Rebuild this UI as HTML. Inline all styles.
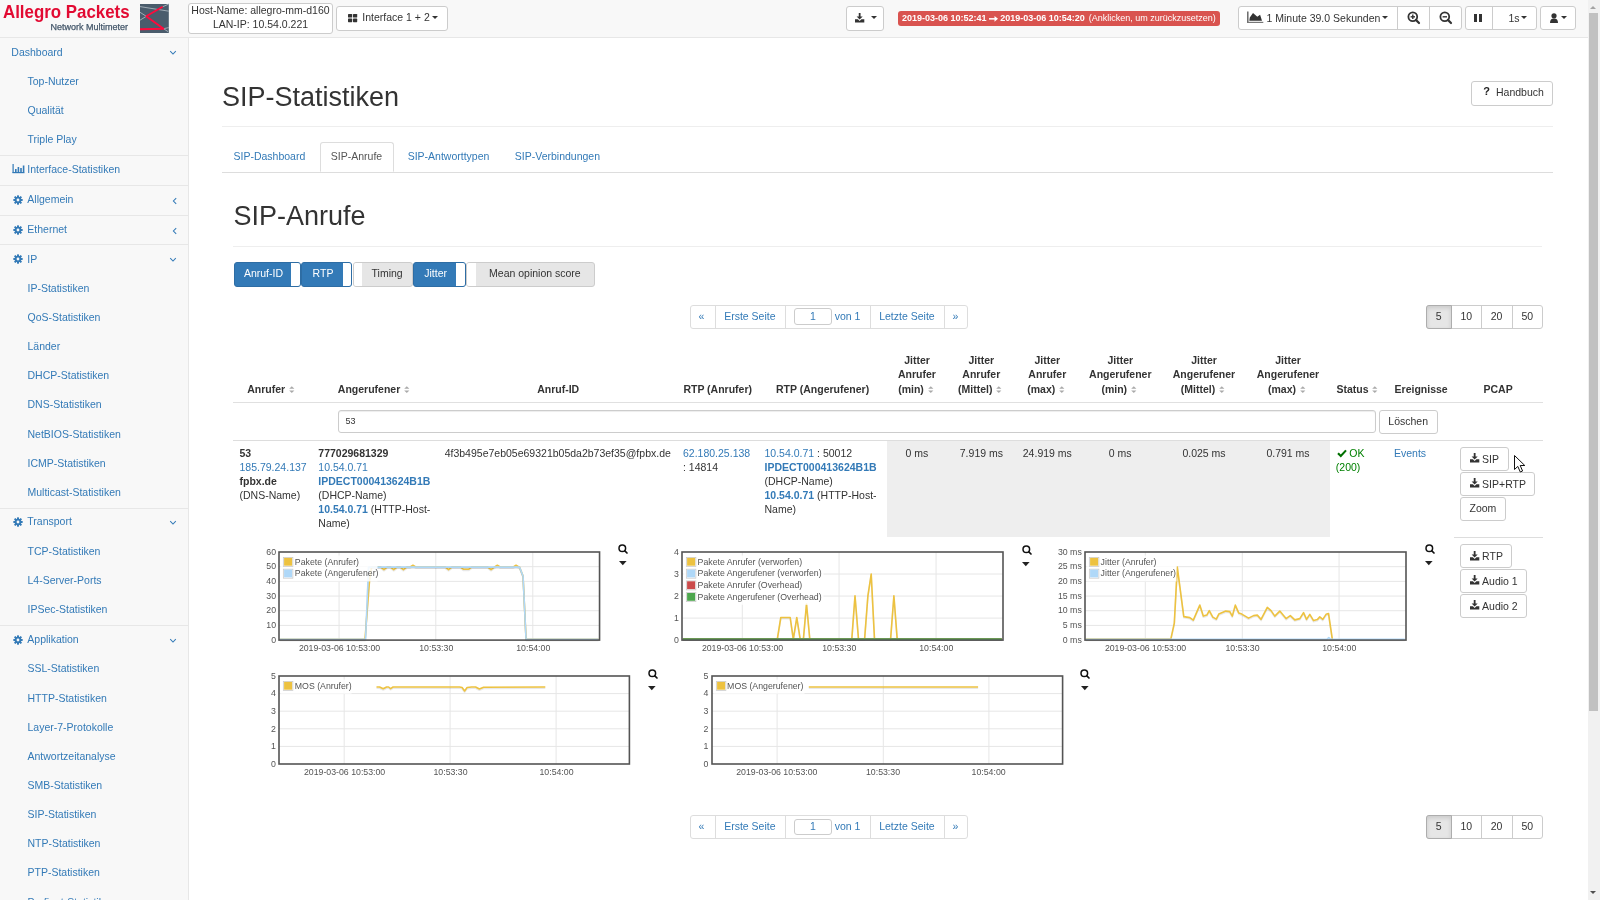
<!DOCTYPE html><html><head><meta charset="utf-8"><style>
html,body{margin:0;padding:0;}
body{width:1600px;height:900px;overflow:hidden;position:relative;background:#fff;font-family:"Liberation Sans",sans-serif;color:#333;}
.a{position:absolute;box-sizing:border-box;}
.t{position:absolute;white-space:nowrap;}
#wrap{position:absolute;left:0;top:0;width:1600px;height:900px;will-change:transform;}
svg{position:absolute;overflow:visible;}
</style></head><body><div id="wrap">
<div class="a" style="left:0px;top:0px;width:1588px;height:37px;background:#f8f8f8;"></div><div class="a" style="left:0px;top:37px;width:1588px;height:1px;background:#e7e7e7;"></div><div class="a" style="left:0px;top:38px;width:188px;height:862px;background:#f8f8f8;"></div><div class="a" style="left:188px;top:38px;width:1px;height:862px;background:#e7e7e7;"></div><div class="a" style="left:1588px;top:0px;width:12px;height:900px;background:#f1f1f1;"></div><div class="a" style="left:1589px;top:13px;width:9px;height:698px;background:#c1c1c1;"></div><div class="t " style="left:11.3px;top:45.76px;font-size:10.5px;line-height:12.6px;color:#337ab7;font-weight:normal;">Dashboard</div><svg width="8" height="6" style="left:169px;top:50.1px"><polyline points="1.2,1.2 4,4 6.8,1.2" fill="none" stroke="#337ab7" stroke-width="1.05"/></svg><div class="t " style="left:27.5px;top:74.90px;font-size:10.5px;line-height:12.6px;color:#337ab7;font-weight:normal;">Top-Nutzer</div><div class="t " style="left:27.5px;top:104.04px;font-size:10.5px;line-height:12.6px;color:#337ab7;font-weight:normal;">Qualität</div><div class="t " style="left:27.5px;top:133.18px;font-size:10.5px;line-height:12.6px;color:#337ab7;font-weight:normal;">Triple Play</div><div class="a" style="left:0px;top:154.7px;width:188px;height:1px;background:#e7e7e7;"></div><div class="t " style="left:27.3px;top:163.16px;font-size:10.5px;line-height:12.6px;color:#337ab7;font-weight:normal;">Interface-Statistiken</div><svg width="13" height="10" style="left:11.5px;top:164.10px"><g fill="#337ab7"><rect x="0.5" y="0" width="1.2" height="9"/><rect x="0.5" y="8" width="12" height="1.2"/><rect x="3" y="5" width="1.6" height="3"/><rect x="5.6" y="3" width="1.6" height="5"/><rect x="8.2" y="4" width="1.6" height="4"/><rect x="10.8" y="1.5" width="1.6" height="6.5"/></g></svg><div class="a" style="left:0px;top:184.8px;width:188px;height:1px;background:#e7e7e7;"></div><div class="t " style="left:27.3px;top:193.16px;font-size:10.5px;line-height:12.6px;color:#337ab7;font-weight:normal;">Allgemein</div><svg width="10" height="10" viewBox="0 0 20 20" style="left:13px;top:194.5px"><g fill="#337ab7"><circle cx="10" cy="10" r="6.6"/><rect x="8" y="0.6" width="4" height="5" rx="0.8" transform="rotate(0 10 10)"/><rect x="8" y="0.6" width="4" height="5" rx="0.8" transform="rotate(45 10 10)"/><rect x="8" y="0.6" width="4" height="5" rx="0.8" transform="rotate(90 10 10)"/><rect x="8" y="0.6" width="4" height="5" rx="0.8" transform="rotate(135 10 10)"/><rect x="8" y="0.6" width="4" height="5" rx="0.8" transform="rotate(180 10 10)"/><rect x="8" y="0.6" width="4" height="5" rx="0.8" transform="rotate(225 10 10)"/><rect x="8" y="0.6" width="4" height="5" rx="0.8" transform="rotate(270 10 10)"/><rect x="8" y="0.6" width="4" height="5" rx="0.8" transform="rotate(315 10 10)"/></g><circle cx="10" cy="10" r="2.8" fill="#f8f8f8"/></svg><svg width="6" height="8" style="left:171.8px;top:196.9px"><polyline points="4.2,1.2 1.4,4 4.2,6.8" fill="none" stroke="#337ab7" stroke-width="1.05"/></svg><div class="a" style="left:0px;top:214.7px;width:188px;height:1px;background:#e7e7e7;"></div><div class="t " style="left:27.3px;top:223.16px;font-size:10.5px;line-height:12.6px;color:#337ab7;font-weight:normal;">Ethernet</div><svg width="10" height="10" viewBox="0 0 20 20" style="left:13px;top:224.5px"><g fill="#337ab7"><circle cx="10" cy="10" r="6.6"/><rect x="8" y="0.6" width="4" height="5" rx="0.8" transform="rotate(0 10 10)"/><rect x="8" y="0.6" width="4" height="5" rx="0.8" transform="rotate(45 10 10)"/><rect x="8" y="0.6" width="4" height="5" rx="0.8" transform="rotate(90 10 10)"/><rect x="8" y="0.6" width="4" height="5" rx="0.8" transform="rotate(135 10 10)"/><rect x="8" y="0.6" width="4" height="5" rx="0.8" transform="rotate(180 10 10)"/><rect x="8" y="0.6" width="4" height="5" rx="0.8" transform="rotate(225 10 10)"/><rect x="8" y="0.6" width="4" height="5" rx="0.8" transform="rotate(270 10 10)"/><rect x="8" y="0.6" width="4" height="5" rx="0.8" transform="rotate(315 10 10)"/></g><circle cx="10" cy="10" r="2.8" fill="#f8f8f8"/></svg><svg width="6" height="8" style="left:171.8px;top:226.9px"><polyline points="4.2,1.2 1.4,4 4.2,6.8" fill="none" stroke="#337ab7" stroke-width="1.05"/></svg><div class="a" style="left:0px;top:244.1px;width:188px;height:1px;background:#e7e7e7;"></div><div class="t " style="left:27.3px;top:252.66px;font-size:10.5px;line-height:12.6px;color:#337ab7;font-weight:normal;">IP</div><svg width="10" height="10" viewBox="0 0 20 20" style="left:13px;top:254.0px"><g fill="#337ab7"><circle cx="10" cy="10" r="6.6"/><rect x="8" y="0.6" width="4" height="5" rx="0.8" transform="rotate(0 10 10)"/><rect x="8" y="0.6" width="4" height="5" rx="0.8" transform="rotate(45 10 10)"/><rect x="8" y="0.6" width="4" height="5" rx="0.8" transform="rotate(90 10 10)"/><rect x="8" y="0.6" width="4" height="5" rx="0.8" transform="rotate(135 10 10)"/><rect x="8" y="0.6" width="4" height="5" rx="0.8" transform="rotate(180 10 10)"/><rect x="8" y="0.6" width="4" height="5" rx="0.8" transform="rotate(225 10 10)"/><rect x="8" y="0.6" width="4" height="5" rx="0.8" transform="rotate(270 10 10)"/><rect x="8" y="0.6" width="4" height="5" rx="0.8" transform="rotate(315 10 10)"/></g><circle cx="10" cy="10" r="2.8" fill="#f8f8f8"/></svg><svg width="8" height="6" style="left:169px;top:257.0px"><polyline points="1.2,1.2 4,4 6.8,1.2" fill="none" stroke="#337ab7" stroke-width="1.05"/></svg><div class="t " style="left:27.5px;top:281.80px;font-size:10.5px;line-height:12.6px;color:#337ab7;font-weight:normal;">IP-Statistiken</div><div class="t " style="left:27.5px;top:310.94px;font-size:10.5px;line-height:12.6px;color:#337ab7;font-weight:normal;">QoS-Statistiken</div><div class="t " style="left:27.5px;top:340.08px;font-size:10.5px;line-height:12.6px;color:#337ab7;font-weight:normal;">Länder</div><div class="t " style="left:27.5px;top:369.22px;font-size:10.5px;line-height:12.6px;color:#337ab7;font-weight:normal;">DHCP-Statistiken</div><div class="t " style="left:27.5px;top:398.36px;font-size:10.5px;line-height:12.6px;color:#337ab7;font-weight:normal;">DNS-Statistiken</div><div class="t " style="left:27.5px;top:427.50px;font-size:10.5px;line-height:12.6px;color:#337ab7;font-weight:normal;">NetBIOS-Statistiken</div><div class="t " style="left:27.5px;top:456.64px;font-size:10.5px;line-height:12.6px;color:#337ab7;font-weight:normal;">ICMP-Statistiken</div><div class="t " style="left:27.5px;top:485.78px;font-size:10.5px;line-height:12.6px;color:#337ab7;font-weight:normal;">Multicast-Statistiken</div><div class="a" style="left:0px;top:507.5px;width:188px;height:1px;background:#e7e7e7;"></div><div class="t " style="left:27.3px;top:515.46px;font-size:10.5px;line-height:12.6px;color:#337ab7;font-weight:normal;">Transport</div><svg width="10" height="10" viewBox="0 0 20 20" style="left:13px;top:516.8px"><g fill="#337ab7"><circle cx="10" cy="10" r="6.6"/><rect x="8" y="0.6" width="4" height="5" rx="0.8" transform="rotate(0 10 10)"/><rect x="8" y="0.6" width="4" height="5" rx="0.8" transform="rotate(45 10 10)"/><rect x="8" y="0.6" width="4" height="5" rx="0.8" transform="rotate(90 10 10)"/><rect x="8" y="0.6" width="4" height="5" rx="0.8" transform="rotate(135 10 10)"/><rect x="8" y="0.6" width="4" height="5" rx="0.8" transform="rotate(180 10 10)"/><rect x="8" y="0.6" width="4" height="5" rx="0.8" transform="rotate(225 10 10)"/><rect x="8" y="0.6" width="4" height="5" rx="0.8" transform="rotate(270 10 10)"/><rect x="8" y="0.6" width="4" height="5" rx="0.8" transform="rotate(315 10 10)"/></g><circle cx="10" cy="10" r="2.8" fill="#f8f8f8"/></svg><svg width="8" height="6" style="left:169px;top:519.8px"><polyline points="1.2,1.2 4,4 6.8,1.2" fill="none" stroke="#337ab7" stroke-width="1.05"/></svg><div class="t " style="left:27.5px;top:544.60px;font-size:10.5px;line-height:12.6px;color:#337ab7;font-weight:normal;">TCP-Statistiken</div><div class="t " style="left:27.5px;top:573.74px;font-size:10.5px;line-height:12.6px;color:#337ab7;font-weight:normal;">L4-Server-Ports</div><div class="t " style="left:27.5px;top:602.88px;font-size:10.5px;line-height:12.6px;color:#337ab7;font-weight:normal;">IPSec-Statistiken</div><div class="a" style="left:0px;top:624.6px;width:188px;height:1px;background:#e7e7e7;"></div><div class="t " style="left:27.3px;top:633.26px;font-size:10.5px;line-height:12.6px;color:#337ab7;font-weight:normal;">Applikation</div><svg width="10" height="10" viewBox="0 0 20 20" style="left:13px;top:634.6px"><g fill="#337ab7"><circle cx="10" cy="10" r="6.6"/><rect x="8" y="0.6" width="4" height="5" rx="0.8" transform="rotate(0 10 10)"/><rect x="8" y="0.6" width="4" height="5" rx="0.8" transform="rotate(45 10 10)"/><rect x="8" y="0.6" width="4" height="5" rx="0.8" transform="rotate(90 10 10)"/><rect x="8" y="0.6" width="4" height="5" rx="0.8" transform="rotate(135 10 10)"/><rect x="8" y="0.6" width="4" height="5" rx="0.8" transform="rotate(180 10 10)"/><rect x="8" y="0.6" width="4" height="5" rx="0.8" transform="rotate(225 10 10)"/><rect x="8" y="0.6" width="4" height="5" rx="0.8" transform="rotate(270 10 10)"/><rect x="8" y="0.6" width="4" height="5" rx="0.8" transform="rotate(315 10 10)"/></g><circle cx="10" cy="10" r="2.8" fill="#f8f8f8"/></svg><svg width="8" height="6" style="left:169px;top:637.6px"><polyline points="1.2,1.2 4,4 6.8,1.2" fill="none" stroke="#337ab7" stroke-width="1.05"/></svg><div class="t " style="left:27.5px;top:662.40px;font-size:10.5px;line-height:12.6px;color:#337ab7;font-weight:normal;">SSL-Statistiken</div><div class="t " style="left:27.5px;top:691.54px;font-size:10.5px;line-height:12.6px;color:#337ab7;font-weight:normal;">HTTP-Statistiken</div><div class="t " style="left:27.5px;top:720.68px;font-size:10.5px;line-height:12.6px;color:#337ab7;font-weight:normal;">Layer-7-Protokolle</div><div class="t " style="left:27.5px;top:749.82px;font-size:10.5px;line-height:12.6px;color:#337ab7;font-weight:normal;">Antwortzeitanalyse</div><div class="t " style="left:27.5px;top:778.96px;font-size:10.5px;line-height:12.6px;color:#337ab7;font-weight:normal;">SMB-Statistiken</div><div class="t " style="left:27.5px;top:808.10px;font-size:10.5px;line-height:12.6px;color:#337ab7;font-weight:normal;">SIP-Statistiken</div><div class="t " style="left:27.5px;top:837.24px;font-size:10.5px;line-height:12.6px;color:#337ab7;font-weight:normal;">NTP-Statistiken</div><div class="t " style="left:27.5px;top:866.38px;font-size:10.5px;line-height:12.6px;color:#337ab7;font-weight:normal;">PTP-Statistiken</div><div class="t " style="left:27.5px;top:895.52px;font-size:10.5px;line-height:12.6px;color:#337ab7;font-weight:normal;">Profinet-Statistiken</div><div class="t " style="left:3.3px;top:1.29px;font-size:18.5px;line-height:22.2px;color:#e20a32;font-weight:bold;transform:scaleX(0.912);transform-origin:0 0;">Allegro Packets</div><div class="t " style="left:50.5px;top:22.08px;font-size:9.0px;line-height:10.8px;color:#44576a;font-weight:normal;-webkit-text-stroke:0.25px #44576a;">Network Multimeter</div><svg width="30" height="30" style="left:140.2px;top:4px"><rect x="0" y="0" width="28.8" height="29" fill="#4a5c6c"/>
<g stroke="#a9b4bd" stroke-width="0.9" fill="none"><line x1="0" y1="2.6" x2="28.8" y2="7.2"/><line x1="28.8" y1="0" x2="22.6" y2="2.8"/><line x1="0" y1="8.3" x2="6.3" y2="12.3"/><line x1="6.3" y1="12.3" x2="0" y2="16.2"/><line x1="23.5" y1="24.7" x2="28.8" y2="23.6"/><line x1="23.5" y1="24.7" x2="28" y2="27.6"/></g>
<polyline points="22.6,2.8 6.3,12.3 23.5,24.7 0,25.3" fill="none" stroke="#ff0a3c" stroke-width="1.9" stroke-linejoin="round"/></svg><div class="a" style="left:188px;top:2.6px;width:145px;height:31px;background:#fff;border:1px solid #ccc;border-radius:3px;"></div><div class="t" style="left:180.50px;width:160px;text-align:center;top:4.26px;font-size:10.5px;line-height:12.6px;color:#333;font-weight:normal;">Host-Name: allegro-mm-d160</div><div class="t" style="left:180.50px;width:160px;text-align:center;top:18.26px;font-size:10.5px;line-height:12.6px;color:#333;font-weight:normal;">LAN-IP: 10.54.0.221</div><div class="a" style="left:336px;top:6px;width:112px;height:24.5px;background:#fff;border:1px solid #ccc;border-radius:3px;"></div><svg width="10" height="9" style="left:347.5px;top:13.5px"><g fill="#333"><rect x="0" y="0" width="4.2" height="3.6" rx="0.6"/><rect x="5" y="0" width="4.2" height="3.6" rx="0.6"/><rect x="0" y="4.6" width="4.2" height="3.6" rx="0.6"/><rect x="5" y="4.6" width="4.2" height="3.6" rx="0.6"/></g></svg><div class="t " style="left:362.3px;top:11.16px;font-size:10.5px;line-height:12.6px;color:#333;font-weight:normal;">Interface 1 + 2</div><svg width="8" height="5" style="left:432px;top:16px"><polygon points="0,0 6.0,0 3.0,3.0" fill="#333"/></svg><div class="a" style="left:846px;top:6px;width:38px;height:24.5px;background:#fff;border:1px solid #ccc;border-radius:3px;"></div><svg width="10" height="10" style="left:855px;top:13px"><g fill="#333"><rect x="3.75" y="0" width="1.8" height="4"/><polygon points="1.6,3.5 7.7,3.5 4.65,6.6"/><path d="M0,6.3 H2.9 L4.65,8.0 L6.4,6.3 H9.3 V9.5 H0 Z"/></g></svg><svg width="8" height="5" style="left:871px;top:16px"><polygon points="0,0 6.0,0 3.0,3.0" fill="#333"/></svg><div class="a" style="left:898.3px;top:10.8px;width:321.7px;height:15px;background:#d9534f;border-radius:3px;"></div><div class="t " style="left:902px;top:13.08px;font-size:9px;line-height:10.8px;color:#fff;font-weight:bold;">2019-03-06 10:52:41</div><svg width="10" height="6" style="left:988.8px;top:15.5px"><rect x="0" y="2.1" width="6.5" height="1.5" fill="#fff"/><polygon points="5.5,0 9,2.85 5.5,5.7" fill="#fff"/></svg><div class="t " style="left:1000.3px;top:13.08px;font-size:9px;line-height:10.8px;color:#fff;font-weight:bold;">2019-03-06 10:54:20</div><div class="t " style="left:1088.8px;top:13.08px;font-size:9px;line-height:10.8px;color:#fff;font-weight:normal;">(Anklicken, um zurückzusetzen)</div><div class="a" style="left:1238px;top:6.2px;width:223.5px;height:24px;background:#fff;border:1px solid #ccc;border-radius:3px;"></div><div class="a" style="left:1397.2px;top:6.2px;width:1px;height:24px;background:#ccc;"></div><div class="a" style="left:1429.3px;top:6.2px;width:1px;height:24px;background:#ccc;"></div><svg width="17" height="13" style="left:1246.5px;top:11px"><g fill="#333"><rect x="0.3" y="0.5" width="1.1" height="11.5"/><rect x="0.3" y="10.8" width="16" height="1.2" fill="#777"/><polygon points="2.3,9.8 2.8,6.5 6,1.9 10.3,5.8 13.1,3.8 15,9.8"/></g></svg><div class="t " style="left:1266.5px;top:11.76px;font-size:10.5px;line-height:12.6px;color:#333;font-weight:normal;">1 Minute 39.0 Sekunden</div><svg width="8" height="5" style="left:1382px;top:16px"><polygon points="0,0 6.0,0 3.0,3.0" fill="#333"/></svg><svg width="13" height="13" style="left:1406.5px;top:10.5px"><g stroke="#333" fill="none"><circle cx="5.8" cy="5.8" r="4.4" stroke-width="1.8"/><line x1="8.9" y1="8.9" x2="12" y2="12" stroke-width="2.2" stroke-linecap="round"/><g stroke-width="1.4"><line x1="3.6" y1="5.8" x2="8" y2="5.8"/><line x1="5.8" y1="3.6" x2="5.8" y2="8"/></g></g></svg><svg width="13" height="13" style="left:1438.5px;top:10.5px"><g stroke="#333" fill="none"><circle cx="5.8" cy="5.8" r="4.4" stroke-width="1.8"/><line x1="8.9" y1="8.9" x2="12" y2="12" stroke-width="2.2" stroke-linecap="round"/><g stroke-width="1.4"><line x1="3.6" y1="5.8" x2="8" y2="5.8"/></g></g></svg><div class="a" style="left:1465.0px;top:6.2px;width:72.3px;height:24px;background:#fff;border:1px solid #ccc;border-radius:3px;"></div><div class="a" style="left:1492.3px;top:6.2px;width:1px;height:24px;background:#ccc;"></div><div class="a" style="left:1473.5px;top:13.5px;width:3.5px;height:8.5px;background:#333;"></div><div class="a" style="left:1478.5px;top:13.5px;width:3.5px;height:8.5px;background:#333;"></div><div class="t " style="left:1508.5px;top:11.76px;font-size:10.5px;line-height:12.6px;color:#333;font-weight:normal;">1s</div><svg width="8" height="5" style="left:1521px;top:16px"><polygon points="0,0 6.0,0 3.0,3.0" fill="#333"/></svg><div class="a" style="left:1540.1px;top:6.2px;width:35.5px;height:24px;background:#fff;border:1px solid #ccc;border-radius:3px;"></div><svg width="10" height="11" style="left:1549.5px;top:12.5px"><g fill="#333"><circle cx="4" cy="2.8" r="2.6"/><path d="M0,10 Q0,5.6 4,5.6 Q8,5.6 8,10 Z"/></g></svg><svg width="8" height="5" style="left:1561px;top:16px"><polygon points="0,0 6.0,0 3.0,3.0" fill="#333"/></svg><svg width="8" height="5" style="left:1590px;top:5px"><polygon points="0,4 6,4 3,1" fill="#a3a3a3"/></svg><svg width="8" height="5" style="left:1590px;top:891px"><polygon points="0,0 6,0 3,3" fill="#505050"/></svg><div class="t " style="left:222px;top:80.54px;font-size:27px;line-height:32.4px;color:#333;font-weight:normal;">SIP-Statistiken</div><div class="a" style="left:1470.5px;top:81.2px;width:82.5px;height:24.5px;background:#fff;border:1px solid #ccc;border-radius:3px;"></div><div class="t " style="left:1483.3px;top:85.19px;font-size:11px;line-height:13.2px;color:#222;font-weight:bold;">?</div><div class="t " style="left:1496px;top:85.66px;font-size:10.5px;line-height:12.6px;color:#333;font-weight:normal;">Handbuch</div><div class="a" style="left:222px;top:125.8px;width:1331px;height:1px;background:#eee;"></div><div class="a" style="left:222px;top:171.5px;width:1331px;height:1px;background:#ddd;"></div><div class="a" style="left:319.5px;top:142.2px;width:74px;height:30.3px;background:#fff;border:1px solid #ddd;border-bottom-color:transparent;border-radius:3px 3px 0 0;"></div><div class="t " style="left:233.5px;top:149.76px;font-size:10.5px;line-height:12.6px;color:#337ab7;font-weight:normal;">SIP-Dashboard</div><div class="t " style="left:330.8px;top:149.76px;font-size:10.5px;line-height:12.6px;color:#555;font-weight:normal;">SIP-Anrufe</div><div class="t " style="left:407.7px;top:149.76px;font-size:10.5px;line-height:12.6px;color:#337ab7;font-weight:normal;">SIP-Antworttypen</div><div class="t " style="left:514.8px;top:149.76px;font-size:10.5px;line-height:12.6px;color:#337ab7;font-weight:normal;">SIP-Verbindungen</div><div class="t " style="left:233.5px;top:200.44px;font-size:27px;line-height:32.4px;color:#333;font-weight:normal;">SIP-Anrufe</div><div class="a" style="left:233px;top:245.8px;width:1309px;height:1px;background:#eee;"></div><div class="a" style="left:233.7px;top:261.9px;width:67.2px;height:24.9px;background:#337ab7;border:1px solid #2e6da4;border-radius:3px;overflow:hidden;"></div><div class="a" style="left:291.09999999999997px;top:262.9px;width:8.8px;height:22.9px;background:#fff;border-radius:0 2px 2px 0;"></div><div class="t" style="left:229.90px;width:67.2px;text-align:center;top:267.36px;font-size:10.5px;line-height:12.6px;color:#fff;font-weight:normal;">Anruf-ID</div><div class="a" style="left:301.3px;top:261.9px;width:51px;height:24.9px;background:#337ab7;border:1px solid #2e6da4;border-radius:3px;overflow:hidden;"></div><div class="a" style="left:342.5px;top:262.9px;width:8.8px;height:22.9px;background:#fff;border-radius:0 2px 2px 0;"></div><div class="t" style="left:297.50px;width:51px;text-align:center;top:267.36px;font-size:10.5px;line-height:12.6px;color:#fff;font-weight:normal;">RTP</div><div class="a" style="left:352.5px;top:261.9px;width:60.5px;height:24.9px;background:#e6e6e6;border:1px solid #ccc;border-radius:3px;"></div><div class="a" style="left:353.5px;top:262.9px;width:8.8px;height:22.9px;background:#fff;border-radius:2px 0 0 2px;"></div><div class="t" style="left:356.90px;width:60.5px;text-align:center;top:267.36px;font-size:10.5px;line-height:12.6px;color:#333;font-weight:normal;">Timing</div><div class="a" style="left:413.2px;top:261.9px;width:52.5px;height:24.9px;background:#337ab7;border:1px solid #2e6da4;border-radius:3px;overflow:hidden;"></div><div class="a" style="left:455.9px;top:262.9px;width:8.8px;height:22.9px;background:#fff;border-radius:0 2px 2px 0;"></div><div class="t" style="left:409.40px;width:52.5px;text-align:center;top:267.36px;font-size:10.5px;line-height:12.6px;color:#fff;font-weight:normal;">Jitter</div><div class="a" style="left:465.9px;top:261.9px;width:129.2px;height:24.9px;background:#e6e6e6;border:1px solid #ccc;border-radius:3px;"></div><div class="a" style="left:466.9px;top:262.9px;width:8.8px;height:22.9px;background:#fff;border-radius:2px 0 0 2px;"></div><div class="t" style="left:470.30px;width:129.2px;text-align:center;top:267.36px;font-size:10.5px;line-height:12.6px;color:#333;font-weight:normal;">Mean opinion score</div><div class="a" style="left:690.3px;top:305.2px;width:278.2px;height:23.7px;background:#fff;border:1px solid #ddd;border-radius:3px;"></div><div class="a" style="left:715.2px;top:305.2px;width:1px;height:23.7px;background:#ddd;"></div><div class="a" style="left:785.3px;top:305.2px;width:1px;height:23.7px;background:#ddd;"></div><div class="a" style="left:870.2px;top:305.2px;width:1px;height:23.7px;background:#ddd;"></div><div class="a" style="left:944.3px;top:305.2px;width:1px;height:23.7px;background:#ddd;"></div><div class="t " style="left:698.5px;top:310.16px;font-size:10.5px;line-height:12.6px;color:#337ab7;font-weight:normal;">&laquo;</div><div class="t " style="left:724.2px;top:310.16px;font-size:10.5px;line-height:12.6px;color:#337ab7;font-weight:normal;">Erste Seite</div><div class="a" style="left:794.4px;top:308.4px;width:37.2px;height:16.2px;background:#fff;border:1px solid #ccc;border-radius:3px;"></div><div class="t" style="left:798.00px;width:30px;text-align:center;top:310.16px;font-size:10.5px;line-height:12.6px;color:#337ab7;font-weight:normal;">1</div><div class="t " style="left:834.7px;top:310.16px;font-size:10.5px;line-height:12.6px;color:#337ab7;font-weight:normal;">von 1</div><div class="t " style="left:879.2px;top:310.16px;font-size:10.5px;line-height:12.6px;color:#337ab7;font-weight:normal;">Letzte Seite</div><div class="t " style="left:952.5px;top:310.16px;font-size:10.5px;line-height:12.6px;color:#337ab7;font-weight:normal;">&raquo;</div><div class="a" style="left:1426.1px;top:305.2px;width:116.6px;height:23.7px;background:#fff;border:1px solid #ccc;border-radius:3px;"></div><div class="a" style="left:1426.1px;top:305.2px;width:26px;height:23.7px;background:#e6e6e6;border:1px solid #adadad;border-radius:3px 0 0 3px;box-shadow:inset 0 2px 4px rgba(0,0,0,.125);"></div><div class="a" style="left:1481.2px;top:305.2px;width:1px;height:23.7px;background:#ccc;"></div><div class="a" style="left:1512px;top:305.2px;width:1px;height:23.7px;background:#ccc;"></div><div class="t" style="left:1428.70px;width:20px;text-align:center;top:310.16px;font-size:10.5px;line-height:12.6px;color:#333;font-weight:normal;">5</div><div class="t" style="left:1451.30px;width:30px;text-align:center;top:310.16px;font-size:10.5px;line-height:12.6px;color:#333;font-weight:normal;">10</div><div class="t" style="left:1481.60px;width:30px;text-align:center;top:310.16px;font-size:10.5px;line-height:12.6px;color:#333;font-weight:normal;">20</div><div class="t" style="left:1512.30px;width:30px;text-align:center;top:310.16px;font-size:10.5px;line-height:12.6px;color:#333;font-weight:normal;">50</div><div class="a" style="left:690.3px;top:815.4px;width:278.2px;height:23.7px;background:#fff;border:1px solid #ddd;border-radius:3px;"></div><div class="a" style="left:715.2px;top:815.4px;width:1px;height:23.7px;background:#ddd;"></div><div class="a" style="left:785.3px;top:815.4px;width:1px;height:23.7px;background:#ddd;"></div><div class="a" style="left:870.2px;top:815.4px;width:1px;height:23.7px;background:#ddd;"></div><div class="a" style="left:944.3px;top:815.4px;width:1px;height:23.7px;background:#ddd;"></div><div class="t " style="left:698.5px;top:820.36px;font-size:10.5px;line-height:12.6px;color:#337ab7;font-weight:normal;">&laquo;</div><div class="t " style="left:724.2px;top:820.36px;font-size:10.5px;line-height:12.6px;color:#337ab7;font-weight:normal;">Erste Seite</div><div class="a" style="left:794.4px;top:818.6px;width:37.2px;height:16.2px;background:#fff;border:1px solid #ccc;border-radius:3px;"></div><div class="t" style="left:798.00px;width:30px;text-align:center;top:820.36px;font-size:10.5px;line-height:12.6px;color:#337ab7;font-weight:normal;">1</div><div class="t " style="left:834.7px;top:820.36px;font-size:10.5px;line-height:12.6px;color:#337ab7;font-weight:normal;">von 1</div><div class="t " style="left:879.2px;top:820.36px;font-size:10.5px;line-height:12.6px;color:#337ab7;font-weight:normal;">Letzte Seite</div><div class="t " style="left:952.5px;top:820.36px;font-size:10.5px;line-height:12.6px;color:#337ab7;font-weight:normal;">&raquo;</div><div class="a" style="left:1426.1px;top:815.4px;width:116.6px;height:23.7px;background:#fff;border:1px solid #ccc;border-radius:3px;"></div><div class="a" style="left:1426.1px;top:815.4px;width:26px;height:23.7px;background:#e6e6e6;border:1px solid #adadad;border-radius:3px 0 0 3px;box-shadow:inset 0 2px 4px rgba(0,0,0,.125);"></div><div class="a" style="left:1481.2px;top:815.4px;width:1px;height:23.7px;background:#ccc;"></div><div class="a" style="left:1512px;top:815.4px;width:1px;height:23.7px;background:#ccc;"></div><div class="t" style="left:1428.70px;width:20px;text-align:center;top:820.36px;font-size:10.5px;line-height:12.6px;color:#333;font-weight:normal;">5</div><div class="t" style="left:1451.30px;width:30px;text-align:center;top:820.36px;font-size:10.5px;line-height:12.6px;color:#333;font-weight:normal;">10</div><div class="t" style="left:1481.60px;width:30px;text-align:center;top:820.36px;font-size:10.5px;line-height:12.6px;color:#333;font-weight:normal;">20</div><div class="t" style="left:1512.30px;width:30px;text-align:center;top:820.36px;font-size:10.5px;line-height:12.6px;color:#333;font-weight:normal;">50</div><div class="t " style="left:247.2px;top:382.56px;font-size:10.5px;line-height:12.6px;color:#333;font-weight:bold;">Anrufer</div><svg width="7" height="8" style="left:288.5px;top:386.4px"><g fill="#aaa"><polygon points="0.2,2.7 5.4,2.7 2.8,0.2"/><polygon points="0.2,4.5 5.4,4.5 2.8,7.1"/></g></svg><div class="t " style="left:337.8px;top:382.56px;font-size:10.5px;line-height:12.6px;color:#333;font-weight:bold;">Angerufener</div><svg width="7" height="8" style="left:403.5px;top:386.4px"><g fill="#aaa"><polygon points="0.2,2.7 5.4,2.7 2.8,0.2"/><polygon points="0.2,4.5 5.4,4.5 2.8,7.1"/></g></svg><div class="t " style="left:537.2px;top:382.56px;font-size:10.5px;line-height:12.6px;color:#333;font-weight:bold;">Anruf-ID</div><div class="t " style="left:683.4px;top:382.56px;font-size:10.5px;line-height:12.6px;color:#333;font-weight:bold;">RTP (Anrufer)</div><div class="t " style="left:776px;top:382.56px;font-size:10.5px;line-height:12.6px;color:#333;font-weight:bold;">RTP (Angerufener)</div><div class="t" style="left:872.00px;width:90px;text-align:center;top:354.36px;font-size:10.5px;line-height:12.6px;color:#333;font-weight:bold;">Jitter</div><div class="t" style="left:872.00px;width:90px;text-align:center;top:368.46px;font-size:10.5px;line-height:12.6px;color:#333;font-weight:bold;">Anrufer</div><div class="t" style="left:866.00px;width:90px;text-align:center;top:382.56px;font-size:10.5px;line-height:12.6px;color:#333;font-weight:bold;">(min)</div><svg width="7" height="8" style="left:927.5px;top:386.4px"><g fill="#aaa"><polygon points="0.2,2.7 5.4,2.7 2.8,0.2"/><polygon points="0.2,4.5 5.4,4.5 2.8,7.1"/></g></svg><div class="t" style="left:936.30px;width:90px;text-align:center;top:354.36px;font-size:10.5px;line-height:12.6px;color:#333;font-weight:bold;">Jitter</div><div class="t" style="left:936.30px;width:90px;text-align:center;top:368.46px;font-size:10.5px;line-height:12.6px;color:#333;font-weight:bold;">Anrufer</div><div class="t" style="left:930.30px;width:90px;text-align:center;top:382.56px;font-size:10.5px;line-height:12.6px;color:#333;font-weight:bold;">(Mittel)</div><svg width="7" height="8" style="left:996px;top:386.4px"><g fill="#aaa"><polygon points="0.2,2.7 5.4,2.7 2.8,0.2"/><polygon points="0.2,4.5 5.4,4.5 2.8,7.1"/></g></svg><div class="t" style="left:1002.30px;width:90px;text-align:center;top:354.36px;font-size:10.5px;line-height:12.6px;color:#333;font-weight:bold;">Jitter</div><div class="t" style="left:1002.30px;width:90px;text-align:center;top:368.46px;font-size:10.5px;line-height:12.6px;color:#333;font-weight:bold;">Anrufer</div><div class="t" style="left:996.30px;width:90px;text-align:center;top:382.56px;font-size:10.5px;line-height:12.6px;color:#333;font-weight:bold;">(max)</div><svg width="7" height="8" style="left:1059.3px;top:386.4px"><g fill="#aaa"><polygon points="0.2,2.7 5.4,2.7 2.8,0.2"/><polygon points="0.2,4.5 5.4,4.5 2.8,7.1"/></g></svg><div class="t" style="left:1075.30px;width:90px;text-align:center;top:354.36px;font-size:10.5px;line-height:12.6px;color:#333;font-weight:bold;">Jitter</div><div class="t" style="left:1075.30px;width:90px;text-align:center;top:368.46px;font-size:10.5px;line-height:12.6px;color:#333;font-weight:bold;">Angerufener</div><div class="t" style="left:1069.30px;width:90px;text-align:center;top:382.56px;font-size:10.5px;line-height:12.6px;color:#333;font-weight:bold;">(min)</div><svg width="7" height="8" style="left:1131px;top:386.4px"><g fill="#aaa"><polygon points="0.2,2.7 5.4,2.7 2.8,0.2"/><polygon points="0.2,4.5 5.4,4.5 2.8,7.1"/></g></svg><div class="t" style="left:1159.00px;width:90px;text-align:center;top:354.36px;font-size:10.5px;line-height:12.6px;color:#333;font-weight:bold;">Jitter</div><div class="t" style="left:1159.00px;width:90px;text-align:center;top:368.46px;font-size:10.5px;line-height:12.6px;color:#333;font-weight:bold;">Angerufener</div><div class="t" style="left:1153.00px;width:90px;text-align:center;top:382.56px;font-size:10.5px;line-height:12.6px;color:#333;font-weight:bold;">(Mittel)</div><svg width="7" height="8" style="left:1218.5px;top:386.4px"><g fill="#aaa"><polygon points="0.2,2.7 5.4,2.7 2.8,0.2"/><polygon points="0.2,4.5 5.4,4.5 2.8,7.1"/></g></svg><div class="t" style="left:1243.00px;width:90px;text-align:center;top:354.36px;font-size:10.5px;line-height:12.6px;color:#333;font-weight:bold;">Jitter</div><div class="t" style="left:1243.00px;width:90px;text-align:center;top:368.46px;font-size:10.5px;line-height:12.6px;color:#333;font-weight:bold;">Angerufener</div><div class="t" style="left:1237.00px;width:90px;text-align:center;top:382.56px;font-size:10.5px;line-height:12.6px;color:#333;font-weight:bold;">(max)</div><svg width="7" height="8" style="left:1300px;top:386.4px"><g fill="#aaa"><polygon points="0.2,2.7 5.4,2.7 2.8,0.2"/><polygon points="0.2,4.5 5.4,4.5 2.8,7.1"/></g></svg><div class="t " style="left:1336.5px;top:382.56px;font-size:10.5px;line-height:12.6px;color:#333;font-weight:bold;">Status</div><svg width="7" height="8" style="left:1371.5px;top:386.4px"><g fill="#aaa"><polygon points="0.2,2.7 5.4,2.7 2.8,0.2"/><polygon points="0.2,4.5 5.4,4.5 2.8,7.1"/></g></svg><div class="t " style="left:1394.6px;top:382.56px;font-size:10.5px;line-height:12.6px;color:#333;font-weight:bold;">Ereignisse</div><div class="t " style="left:1483.5px;top:382.56px;font-size:10.5px;line-height:12.6px;color:#333;font-weight:bold;">PCAP</div><div class="a" style="left:233px;top:402.2px;width:1309.5px;height:1.3px;background:#e0e0e0;"></div><div class="a" style="left:338px;top:410px;width:1037.5px;height:22.5px;background:#fff;border:1px solid #ccc;border-radius:3px;box-shadow:inset 0 1px 1px rgba(0,0,0,.075);"></div><div class="t " style="left:345.5px;top:416.28px;font-size:9px;line-height:10.8px;color:#333;font-weight:normal;">53</div><div class="a" style="left:1378.5px;top:409.5px;width:59px;height:24.2px;background:#fff;border:1px solid #ccc;border-radius:3px;"></div><div class="t " style="left:1388.3px;top:415.36px;font-size:10.5px;line-height:12.6px;color:#333;font-weight:normal;">Löschen</div><div class="a" style="left:233px;top:440px;width:1309.5px;height:1px;background:#ddd;"></div><div class="a" style="left:887px;top:441px;width:443px;height:96.2px;background:#eee;"></div><div class="t " style="left:239.5px;top:446.66px;font-size:10.5px;line-height:12.6px;color:#333;font-weight:bold;">53</div><div class="t " style="left:239.5px;top:460.76px;font-size:10.5px;line-height:12.6px;color:#337ab7;font-weight:normal;">185.79.24.137</div><div class="t " style="left:239.5px;top:474.86px;font-size:10.5px;line-height:12.6px;color:#333;font-weight:bold;">fpbx.de</div><div class="t " style="left:239.5px;top:488.96px;font-size:10.5px;line-height:12.6px;color:#333;font-weight:normal;">(DNS-Name)</div><div class="t " style="left:318.3px;top:446.66px;font-size:10.5px;line-height:12.6px;color:#333;font-weight:bold;">777029681329</div><div class="t " style="left:318.3px;top:460.76px;font-size:10.5px;line-height:12.6px;color:#337ab7;font-weight:normal;">10.54.0.71</div><div class="t " style="left:318.3px;top:474.86px;font-size:10.5px;line-height:12.6px;color:#337ab7;font-weight:bold;">IPDECT000413624B1B</div><div class="t " style="left:318.3px;top:488.96px;font-size:10.5px;line-height:12.6px;color:#333;font-weight:normal;">(DHCP-Name)</div><div class="t " style="left:318.3px;top:503.06px;font-size:10.5px;line-height:12.6px;color:#333;font-weight:normal;"><b style="color:#337ab7">10.54.0.71</b> (HTTP-Host-</div><div class="t " style="left:318.3px;top:517.16px;font-size:10.5px;line-height:12.6px;color:#333;font-weight:normal;">Name)</div><div class="t " style="left:444.7px;top:446.66px;font-size:10.5px;line-height:12.6px;color:#333;font-weight:normal;">4f3b495e7eb05e69321b05da2b73ef35@fpbx.de</div><div class="t " style="left:683px;top:446.66px;font-size:10.5px;line-height:12.6px;color:#337ab7;font-weight:normal;">62.180.25.138</div><div class="t " style="left:683px;top:460.76px;font-size:10.5px;line-height:12.6px;color:#333;font-weight:normal;">: 14814</div><div class="t " style="left:764.5px;top:446.66px;font-size:10.5px;line-height:12.6px;color:#333;font-weight:normal;"><span style="color:#337ab7">10.54.0.71</span> : 50012</div><div class="t " style="left:764.5px;top:460.76px;font-size:10.5px;line-height:12.6px;color:#337ab7;font-weight:bold;">IPDECT000413624B1B</div><div class="t " style="left:764.5px;top:474.86px;font-size:10.5px;line-height:12.6px;color:#333;font-weight:normal;">(DHCP-Name)</div><div class="t " style="left:764.5px;top:488.96px;font-size:10.5px;line-height:12.6px;color:#333;font-weight:normal;"><b style="color:#337ab7">10.54.0.71</b> (HTTP-Host-</div><div class="t " style="left:764.5px;top:503.06px;font-size:10.5px;line-height:12.6px;color:#333;font-weight:normal;">Name)</div><div class="t" style="left:877.00px;width:80px;text-align:center;top:446.66px;font-size:10.5px;line-height:12.6px;color:#333;font-weight:normal;">0 ms</div><div class="t" style="left:941.40px;width:80px;text-align:center;top:446.66px;font-size:10.5px;line-height:12.6px;color:#333;font-weight:normal;">7.919 ms</div><div class="t" style="left:1007.30px;width:80px;text-align:center;top:446.66px;font-size:10.5px;line-height:12.6px;color:#333;font-weight:normal;">24.919 ms</div><div class="t" style="left:1080.20px;width:80px;text-align:center;top:446.66px;font-size:10.5px;line-height:12.6px;color:#333;font-weight:normal;">0 ms</div><div class="t" style="left:1164.00px;width:80px;text-align:center;top:446.66px;font-size:10.5px;line-height:12.6px;color:#333;font-weight:normal;">0.025 ms</div><div class="t" style="left:1248.00px;width:80px;text-align:center;top:446.66px;font-size:10.5px;line-height:12.6px;color:#333;font-weight:normal;">0.791 ms</div><svg width="10" height="9" style="left:1336.5px;top:448.6px"><polyline points="1,4.2 3.8,7 9,1.4" fill="none" stroke="#007000" stroke-width="2.1"/></svg><div class="t " style="left:1349.3px;top:446.66px;font-size:10.5px;line-height:12.6px;color:#008000;font-weight:normal;">OK</div><div class="t " style="left:1335.8px;top:460.76px;font-size:10.5px;line-height:12.6px;color:#008000;font-weight:normal;">(200)</div><div class="t " style="left:1394px;top:446.66px;font-size:10.5px;line-height:12.6px;color:#337ab7;font-weight:normal;">Events</div><div class="a" style="left:1459.9px;top:446.90000000000003px;width:48.699999999999996px;height:24.2px;background:#fff;border:1px solid #ccc;border-radius:3px;"></div><svg width="10" height="10" style="left:1469.9px;top:453.3px"><g fill="#333"><rect x="3.75" y="0" width="1.8" height="4"/><polygon points="1.6,3.5 7.7,3.5 4.65,6.6"/><path d="M0,6.3 H2.9 L4.65,8.0 L6.4,6.3 H9.3 V9.5 H0 Z"/></g></svg><div class="t " style="left:1482.1px;top:452.76px;font-size:10.5px;line-height:12.6px;color:#333;font-weight:normal;">SIP</div><div class="a" style="left:1459.9px;top:471.70000000000005px;width:75.0px;height:24.2px;background:#fff;border:1px solid #ccc;border-radius:3px;"></div><svg width="10" height="10" style="left:1469.9px;top:478.1px"><g fill="#333"><rect x="3.75" y="0" width="1.8" height="4"/><polygon points="1.6,3.5 7.7,3.5 4.65,6.6"/><path d="M0,6.3 H2.9 L4.65,8.0 L6.4,6.3 H9.3 V9.5 H0 Z"/></g></svg><div class="t " style="left:1482.1px;top:477.56px;font-size:10.5px;line-height:12.6px;color:#333;font-weight:normal;">SIP+RTP</div><div class="a" style="left:1459.9px;top:496.6px;width:46.0px;height:24.2px;background:#fff;border:1px solid #ccc;border-radius:3px;"></div><div class="t " style="left:1469.5px;top:502.46px;font-size:10.5px;line-height:12.6px;color:#333;font-weight:normal;">Zoom</div><div class="a" style="left:1454.4px;top:537.2px;width:88.2px;height:1px;background:#ddd;"></div><div class="a" style="left:1459.9px;top:544.2px;width:52.4px;height:24.2px;background:#fff;border:1px solid #ccc;border-radius:3px;"></div><svg width="10" height="10" style="left:1469.9px;top:550.6px"><g fill="#333"><rect x="3.75" y="0" width="1.8" height="4"/><polygon points="1.6,3.5 7.7,3.5 4.65,6.6"/><path d="M0,6.3 H2.9 L4.65,8.0 L6.4,6.3 H9.3 V9.5 H0 Z"/></g></svg><div class="t " style="left:1482.1px;top:550.06px;font-size:10.5px;line-height:12.6px;color:#333;font-weight:normal;">RTP</div><div class="a" style="left:1459.9px;top:569.0px;width:67.0px;height:24.2px;background:#fff;border:1px solid #ccc;border-radius:3px;"></div><svg width="10" height="10" style="left:1469.9px;top:575.4px"><g fill="#333"><rect x="3.75" y="0" width="1.8" height="4"/><polygon points="1.6,3.5 7.7,3.5 4.65,6.6"/><path d="M0,6.3 H2.9 L4.65,8.0 L6.4,6.3 H9.3 V9.5 H0 Z"/></g></svg><div class="t " style="left:1482.1px;top:574.86px;font-size:10.5px;line-height:12.6px;color:#333;font-weight:normal;">Audio 1</div><div class="a" style="left:1459.9px;top:593.9px;width:67.0px;height:24.2px;background:#fff;border:1px solid #ccc;border-radius:3px;"></div><svg width="10" height="10" style="left:1469.9px;top:600.3px"><g fill="#333"><rect x="3.75" y="0" width="1.8" height="4"/><polygon points="1.6,3.5 7.7,3.5 4.65,6.6"/><path d="M0,6.3 H2.9 L4.65,8.0 L6.4,6.3 H9.3 V9.5 H0 Z"/></g></svg><div class="t " style="left:1482.1px;top:599.76px;font-size:10.5px;line-height:12.6px;color:#333;font-weight:normal;">Audio 2</div><svg width="14" height="20" style="left:1514.2px;top:455px"><path d="M0.5,0.5 L0.5,14.5 L3.8,11.4 L6.3,17 L8.6,16 L6.2,10.5 L10.8,10.5 Z" fill="#fff" stroke="#111" stroke-width="1" stroke-linejoin="round"/></svg><svg width="340.6" height="108.1" style="left:269.45px;top:541.9px"><line x1="10.0" y1="83.42" x2="330.55" y2="83.42" stroke="#e6e6e6" stroke-width="1"/><line x1="10.0" y1="68.73" x2="330.55" y2="68.73" stroke="#e6e6e6" stroke-width="1"/><line x1="10.0" y1="54.05" x2="330.55" y2="54.05" stroke="#e6e6e6" stroke-width="1"/><line x1="10.0" y1="39.37" x2="330.55" y2="39.37" stroke="#e6e6e6" stroke-width="1"/><line x1="10.0" y1="24.68" x2="330.55" y2="24.68" stroke="#e6e6e6" stroke-width="1"/><line x1="70.05" y1="10.0" x2="70.05" y2="98.1" stroke="#e6e6e6" stroke-width="1"/><line x1="166.8" y1="10.0" x2="166.8" y2="98.1" stroke="#e6e6e6" stroke-width="1"/><line x1="263.8" y1="10.0" x2="263.8" y2="98.1" stroke="#e6e6e6" stroke-width="1"/><polyline points="10.75,98.5 96.05,98.5 98.05,71.3 100.55,39.300000000000004 102.55,26.3 106.55,26.3 111.75,26.3 114.95,28.8 118.15,26.3 121.55,26.3 124.75,28.8 127.95,26.3 131.25,26.3 134.45,28.8 137.65,26.3 140.75,26.3 143.95,24.5 147.15,26.3 176.35,26.3 179.55,28.8 182.75,26.3 191.55,26.3 194.55,28.5 199.55,28.5 202.55,26.3 218.85,26.3 222.05,28.8 225.25,26.3 225.15,26.3 228.35,24.5 231.55,26.3 243.85,26.3 247.05,24.5 250.25,26.3 250.55,26.3 254.05,35.300000000000004 257.05,98.5 329.55,98.5" fill="none" stroke="rgba(0,0,0,0.09)" stroke-width="1.6" stroke-linejoin="round"/><polyline points="10.75,97.3 96.05,97.3 98.05,70.1 100.55,38.1 102.55,25.1 106.55,25.1 111.75,25.1 114.95,27.6 118.15,25.1 121.55,25.1 124.75,27.6 127.95,25.1 131.25,25.1 134.45,27.6 137.65,25.1 140.75,25.1 143.95,23.3 147.15,25.1 176.35,25.1 179.55,27.6 182.75,25.1 191.55,25.1 194.55,27.3 199.55,27.3 202.55,25.1 218.85,25.1 222.05,27.6 225.25,25.1 225.15,25.1 228.35,23.3 231.55,25.1 243.85,25.1 247.05,23.3 250.25,25.1 250.55,25.1 254.05,34.1 257.05,97.3 329.55,97.3" fill="none" stroke="#edc240" stroke-width="1.6" stroke-linejoin="round"/><polyline points="10.75,98.5 96.55,98.5 99.55,26.3 108.55,26.3 250.55,26.3 254.05,35.300000000000004 257.05,98.5 329.55,98.5" fill="none" stroke="rgba(0,0,0,0.09)" stroke-width="1.6" stroke-linejoin="round"/><polyline points="10.75,97.3 96.55,97.3 99.55,25.1 108.55,25.1 250.55,25.1 254.05,34.1 257.05,97.3 329.55,97.3" fill="none" stroke="#afd8f8" stroke-width="1.6" stroke-linejoin="round"/><rect x="11.5" y="13.5" width="97" height="25.9" fill="rgba(255,255,255,0.85)"/><rect x="14.35" y="15.5" width="9.5" height="9" fill="#fff" stroke="#ccc" stroke-width="0.8"/><rect x="15.1" y="15.9" width="8" height="7.8" fill="#edc240"/><rect x="14.35" y="27.2" width="9.5" height="9" fill="#fff" stroke="#ccc" stroke-width="0.8"/><rect x="15.1" y="27.6" width="8" height="7.8" fill="#afd8f8"/><rect x="10.0" y="10.0" width="320.55" height="88.10" fill="none" stroke="#545454" stroke-width="1.6"/></svg><div class="t " style="left:294.84999999999997px;top:556.62px;font-size:8.75px;line-height:10.5px;color:#545454;font-weight:normal;">Pakete (Anrufer)</div><div class="t " style="left:294.84999999999997px;top:568.32px;font-size:8.75px;line-height:10.5px;color:#545454;font-weight:normal;">Pakete (Angerufener)</div><div class="t" style="left:199.45px;width:76.60px;text-align:right;top:634.75px;font-size:8.75px;line-height:10.5px;color:#545454;">0</div><div class="t" style="left:199.45px;width:76.60px;text-align:right;top:620.07px;font-size:8.75px;line-height:10.5px;color:#545454;">10</div><div class="t" style="left:199.45px;width:76.60px;text-align:right;top:605.38px;font-size:8.75px;line-height:10.5px;color:#545454;">20</div><div class="t" style="left:199.45px;width:76.60px;text-align:right;top:590.70px;font-size:8.75px;line-height:10.5px;color:#545454;">30</div><div class="t" style="left:199.45px;width:76.60px;text-align:right;top:576.02px;font-size:8.75px;line-height:10.5px;color:#545454;">40</div><div class="t" style="left:199.45px;width:76.60px;text-align:right;top:561.33px;font-size:8.75px;line-height:10.5px;color:#545454;">50</div><div class="t" style="left:199.45px;width:76.60px;text-align:right;top:546.65px;font-size:8.75px;line-height:10.5px;color:#545454;">60</div><div class="t" style="left:279.50px;width:120px;text-align:center;top:642.72px;font-size:8.75px;line-height:10.5px;color:#545454;font-weight:normal;">2019-03-06 10:53:00</div><div class="t" style="left:376.25px;width:120px;text-align:center;top:642.72px;font-size:8.75px;line-height:10.5px;color:#545454;font-weight:normal;">10:53:30</div><div class="t" style="left:473.25px;width:120px;text-align:center;top:642.72px;font-size:8.75px;line-height:10.5px;color:#545454;font-weight:normal;">10:54:00</div><svg width="10" height="10" style="left:618.1999999999999px;top:544.4px"><circle cx="4.3" cy="4.3" r="3.3" fill="none" stroke="#111" stroke-width="1.5"/><line x1="6.8" y1="6.8" x2="9" y2="9" stroke="#111" stroke-width="1.7" stroke-linecap="round"/></svg><svg width="9" height="6" style="left:618.8px;top:561.4px"><polygon points="0,0 7.6,0 3.8,4.3" fill="#222"/></svg><svg width="341.0" height="108.1" style="left:672.2px;top:541.9px"><line x1="10.0" y1="76.08" x2="331.0" y2="76.08" stroke="#e6e6e6" stroke-width="1"/><line x1="10.0" y1="54.05" x2="331.0" y2="54.05" stroke="#e6e6e6" stroke-width="1"/><line x1="10.0" y1="32.02" x2="331.0" y2="32.02" stroke="#e6e6e6" stroke-width="1"/><line x1="70.3" y1="10.0" x2="70.3" y2="98.1" stroke="#e6e6e6" stroke-width="1"/><line x1="167.05" y1="10.0" x2="167.05" y2="98.1" stroke="#e6e6e6" stroke-width="1"/><line x1="264.05" y1="10.0" x2="264.05" y2="98.1" stroke="#e6e6e6" stroke-width="1"/><polyline points="10.8,98.3 105.3,98.3 108.8,76.7 118.2,76.7 121.3,98.3 124.8,76.7 128.2,98.3 131.4,98.3 134.5,62.900000000000006 137.8,98.3 179.8,98.3 183.0,55.0 186.5,98.3 192.6,98.3 195.9,55.0 199.2,33.300000000000004 202.5,98.3 218.6,98.3 221.9,55.0 225.2,98.3 329.8,98.3" fill="none" stroke="rgba(0,0,0,0.09)" stroke-width="1.6" stroke-linejoin="round"/><polyline points="10.8,97.1 105.3,97.1 108.8,75.5 118.2,75.5 121.3,97.1 124.8,75.5 128.2,97.1 131.4,97.1 134.5,61.7 137.8,97.1 179.8,97.1 183.0,53.8 186.5,97.1 192.6,97.1 195.9,53.8 199.2,32.1 202.5,97.1 218.6,97.1 221.9,53.8 225.2,97.1 329.8,97.1" fill="none" stroke="#edc240" stroke-width="1.6" stroke-linejoin="round"/><polyline points="10.8,98.3 329.8,98.3" fill="none" stroke="rgba(0,0,0,0.09)" stroke-width="1.6" stroke-linejoin="round"/><polyline points="10.8,97.1 329.8,97.1" fill="none" stroke="#afd8f8" stroke-width="1.6" stroke-linejoin="round"/><polyline points="10.8,98.3 329.8,98.3" fill="none" stroke="rgba(0,0,0,0.09)" stroke-width="1.6" stroke-linejoin="round"/><polyline points="10.8,97.1 329.8,97.1" fill="none" stroke="#cb4b4b" stroke-width="1.6" stroke-linejoin="round"/><polyline points="10.8,98.3 329.8,98.3" fill="none" stroke="rgba(0,0,0,0.09)" stroke-width="1.6" stroke-linejoin="round"/><polyline points="10.8,97.1 329.8,97.1" fill="none" stroke="#4da74d" stroke-width="1.6" stroke-linejoin="round"/><rect x="11.5" y="13.5" width="140" height="49.3" fill="rgba(255,255,255,0.85)"/><rect x="14.35" y="15.5" width="9.5" height="9" fill="#fff" stroke="#ccc" stroke-width="0.8"/><rect x="15.1" y="15.9" width="8" height="7.8" fill="#edc240"/><rect x="14.35" y="27.2" width="9.5" height="9" fill="#fff" stroke="#ccc" stroke-width="0.8"/><rect x="15.1" y="27.6" width="8" height="7.8" fill="#afd8f8"/><rect x="14.35" y="38.9" width="9.5" height="9" fill="#fff" stroke="#ccc" stroke-width="0.8"/><rect x="15.1" y="39.3" width="8" height="7.8" fill="#cb4b4b"/><rect x="14.35" y="50.6" width="9.5" height="9" fill="#fff" stroke="#ccc" stroke-width="0.8"/><rect x="15.1" y="51.0" width="8" height="7.8" fill="#4da74d"/><rect x="10.0" y="10.0" width="321.00" height="88.10" fill="none" stroke="#545454" stroke-width="1.6"/></svg><div class="t " style="left:697.6px;top:556.62px;font-size:8.75px;line-height:10.5px;color:#545454;font-weight:normal;">Pakete Anrufer (verworfen)</div><div class="t " style="left:697.6px;top:568.32px;font-size:8.75px;line-height:10.5px;color:#545454;font-weight:normal;">Pakete Angerufener (verworfen)</div><div class="t " style="left:697.6px;top:580.02px;font-size:8.75px;line-height:10.5px;color:#545454;font-weight:normal;">Pakete Anrufer (Overhead)</div><div class="t " style="left:697.6px;top:591.72px;font-size:8.75px;line-height:10.5px;color:#545454;font-weight:normal;">Pakete Angerufener (Overhead)</div><div class="t" style="left:602.20px;width:76.60px;text-align:right;top:634.75px;font-size:8.75px;line-height:10.5px;color:#545454;">0</div><div class="t" style="left:602.20px;width:76.60px;text-align:right;top:612.73px;font-size:8.75px;line-height:10.5px;color:#545454;">1</div><div class="t" style="left:602.20px;width:76.60px;text-align:right;top:590.70px;font-size:8.75px;line-height:10.5px;color:#545454;">2</div><div class="t" style="left:602.20px;width:76.60px;text-align:right;top:568.67px;font-size:8.75px;line-height:10.5px;color:#545454;">3</div><div class="t" style="left:602.20px;width:76.60px;text-align:right;top:546.65px;font-size:8.75px;line-height:10.5px;color:#545454;">4</div><div class="t" style="left:682.50px;width:120px;text-align:center;top:642.72px;font-size:8.75px;line-height:10.5px;color:#545454;font-weight:normal;">2019-03-06 10:53:00</div><div class="t" style="left:779.25px;width:120px;text-align:center;top:642.72px;font-size:8.75px;line-height:10.5px;color:#545454;font-weight:normal;">10:53:30</div><div class="t" style="left:876.25px;width:120px;text-align:center;top:642.72px;font-size:8.75px;line-height:10.5px;color:#545454;font-weight:normal;">10:54:00</div><svg width="10" height="10" style="left:1021.6px;top:544.6px"><circle cx="4.3" cy="4.3" r="3.3" fill="none" stroke="#111" stroke-width="1.5"/><line x1="6.8" y1="6.8" x2="9" y2="9" stroke="#111" stroke-width="1.7" stroke-linecap="round"/></svg><svg width="9" height="6" style="left:1022.2px;top:561.6px"><polygon points="0,0 7.6,0 3.8,4.3" fill="#222"/></svg><svg width="341.0" height="108.1" style="left:1075.2px;top:541.9px"><line x1="10.0" y1="83.42" x2="331.0" y2="83.42" stroke="#e6e6e6" stroke-width="1"/><line x1="10.0" y1="68.73" x2="331.0" y2="68.73" stroke="#e6e6e6" stroke-width="1"/><line x1="10.0" y1="54.05" x2="331.0" y2="54.05" stroke="#e6e6e6" stroke-width="1"/><line x1="10.0" y1="39.37" x2="331.0" y2="39.37" stroke="#e6e6e6" stroke-width="1"/><line x1="10.0" y1="24.68" x2="331.0" y2="24.68" stroke="#e6e6e6" stroke-width="1"/><line x1="70.3" y1="10.0" x2="70.3" y2="98.1" stroke="#e6e6e6" stroke-width="1"/><line x1="167.3" y1="10.0" x2="167.3" y2="98.1" stroke="#e6e6e6" stroke-width="1"/><line x1="264.05" y1="10.0" x2="264.05" y2="98.1" stroke="#e6e6e6" stroke-width="1"/><polyline points="10.8,98.3 95.8,98.3 99.3,82.3 102.3,26.3 108.8,75.8 114.8,76.8 118.3,79.3 124.8,64.3 128.3,75.3 131.8,74.3 134.3,69.8 137.8,76.3 141.3,78.3 143.8,73.3 150.8,70.3 154.8,70.8 157.3,75.3 160.3,64.3 163.8,72.3 166.8,73.3 173.55,77.3 178.55,74.8 182.3,74.3 186.05,78.55 192.3,66.55 196.05,69.8 199.8,75.3 204.8,70.3 211.05,77.8 215.3,74.8 219.8,79.05 224.8,77.8 228.55,71.8 231.55,78.55 234.8,73.55 238.55,79.8 242.3,78.8 244.8,76.05 247.8,78.55 251.05,73.55 253.55,72.8 257.3,98.3" fill="none" stroke="rgba(0,0,0,0.09)" stroke-width="1.6" stroke-linejoin="round"/><polyline points="10.8,97.1 95.8,97.1 99.3,81.1 102.3,25.1 108.8,74.6 114.8,75.6 118.3,78.1 124.8,63.1 128.3,74.1 131.8,73.1 134.3,68.6 137.8,75.1 141.3,77.1 143.8,72.1 150.8,69.1 154.8,69.6 157.3,74.1 160.3,63.1 163.8,71.1 166.8,72.1 173.55,76.1 178.55,73.6 182.3,73.1 186.05,77.35 192.3,65.35 196.05,68.6 199.8,74.1 204.8,69.1 211.05,76.6 215.3,73.6 219.8,77.85 224.8,76.6 228.55,70.6 231.55,77.35 234.8,72.35 238.55,78.6 242.3,77.6 244.8,74.85 247.8,77.35 251.05,72.35 253.55,71.6 257.3,97.1" fill="none" stroke="#edc240" stroke-width="1.6" stroke-linejoin="round"/><polyline points="10.8,98.5 251.8,98.5 253.8,96.8 255.8,98.5 329.8,98.5" fill="none" stroke="rgba(0,0,0,0.09)" stroke-width="1.6" stroke-linejoin="round"/><polyline points="10.8,97.3 251.8,97.3 253.8,95.6 255.8,97.3 329.8,97.3" fill="none" stroke="#afd8f8" stroke-width="1.6" stroke-linejoin="round"/><rect x="11.5" y="13.5" width="90" height="25.9" fill="rgba(255,255,255,0.85)"/><rect x="14.35" y="15.5" width="9.5" height="9" fill="#fff" stroke="#ccc" stroke-width="0.8"/><rect x="15.1" y="15.9" width="8" height="7.8" fill="#edc240"/><rect x="14.35" y="27.2" width="9.5" height="9" fill="#fff" stroke="#ccc" stroke-width="0.8"/><rect x="15.1" y="27.6" width="8" height="7.8" fill="#afd8f8"/><rect x="10.0" y="10.0" width="321.00" height="88.10" fill="none" stroke="#545454" stroke-width="1.6"/></svg><div class="t " style="left:1100.6000000000001px;top:556.62px;font-size:8.75px;line-height:10.5px;color:#545454;font-weight:normal;">Jitter (Anrufer)</div><div class="t " style="left:1100.6000000000001px;top:568.32px;font-size:8.75px;line-height:10.5px;color:#545454;font-weight:normal;">Jitter (Angerufener)</div><div class="t" style="left:1005.20px;width:76.60px;text-align:right;top:634.75px;font-size:8.75px;line-height:10.5px;color:#545454;">0 ms</div><div class="t" style="left:1005.20px;width:76.60px;text-align:right;top:620.07px;font-size:8.75px;line-height:10.5px;color:#545454;">5 ms</div><div class="t" style="left:1005.20px;width:76.60px;text-align:right;top:605.38px;font-size:8.75px;line-height:10.5px;color:#545454;">10 ms</div><div class="t" style="left:1005.20px;width:76.60px;text-align:right;top:590.70px;font-size:8.75px;line-height:10.5px;color:#545454;">15 ms</div><div class="t" style="left:1005.20px;width:76.60px;text-align:right;top:576.02px;font-size:8.75px;line-height:10.5px;color:#545454;">20 ms</div><div class="t" style="left:1005.20px;width:76.60px;text-align:right;top:561.33px;font-size:8.75px;line-height:10.5px;color:#545454;">25 ms</div><div class="t" style="left:1005.20px;width:76.60px;text-align:right;top:546.65px;font-size:8.75px;line-height:10.5px;color:#545454;">30 ms</div><div class="t" style="left:1085.50px;width:120px;text-align:center;top:642.72px;font-size:8.75px;line-height:10.5px;color:#545454;font-weight:normal;">2019-03-06 10:53:00</div><div class="t" style="left:1182.50px;width:120px;text-align:center;top:642.72px;font-size:8.75px;line-height:10.5px;color:#545454;font-weight:normal;">10:53:30</div><div class="t" style="left:1279.25px;width:120px;text-align:center;top:642.72px;font-size:8.75px;line-height:10.5px;color:#545454;font-weight:normal;">10:54:00</div><svg width="10" height="10" style="left:1424.6000000000001px;top:544.4px"><circle cx="4.3" cy="4.3" r="3.3" fill="none" stroke="#111" stroke-width="1.5"/><line x1="6.8" y1="6.8" x2="9" y2="9" stroke="#111" stroke-width="1.7" stroke-linecap="round"/></svg><svg width="9" height="6" style="left:1425.2px;top:561.4px"><polygon points="0,0 7.6,0 3.8,4.3" fill="#222"/></svg><svg width="370.4" height="108.0" style="left:269.4px;top:666px"><line x1="10.0" y1="80.4" x2="360.4" y2="80.4" stroke="#e6e6e6" stroke-width="1"/><line x1="10.0" y1="62.8" x2="360.4" y2="62.8" stroke="#e6e6e6" stroke-width="1"/><line x1="10.0" y1="45.2" x2="360.4" y2="45.2" stroke="#e6e6e6" stroke-width="1"/><line x1="10.0" y1="27.6" x2="360.4" y2="27.6" stroke="#e6e6e6" stroke-width="1"/><line x1="75.2" y1="10" x2="75.2" y2="98" stroke="#e6e6e6" stroke-width="1"/><line x1="181.1" y1="10" x2="181.1" y2="98" stroke="#e6e6e6" stroke-width="1"/><line x1="287.1" y1="10" x2="287.1" y2="98" stroke="#e6e6e6" stroke-width="1"/><polyline points="107.5,22.2 110.6,22.2 114.2,24.0 117.6,22.2 119.6,22.2 121.6,23.8 124.1,22.2 190.6,22.2 193.1,22.7 195.6,26.2 198.1,22.7 202.6,22.2 206.6,22.2 210.4,24.2 214.6,22.4 276.3,22.2" fill="none" stroke="rgba(0,0,0,0.09)" stroke-width="1.6" stroke-linejoin="round"/><polyline points="107.5,21 110.6,21 114.2,22.8 117.6,21 119.6,21 121.6,22.6 124.1,21 190.6,21 193.1,21.5 195.6,25 198.1,21.5 202.6,21 206.6,21 210.4,23 214.6,21.2 276.3,21" fill="none" stroke="#edc240" stroke-width="1.6" stroke-linejoin="round"/><rect x="11.5" y="13.5" width="71" height="14.2" fill="rgba(255,255,255,0.85)"/><rect x="14.35" y="15.5" width="9.5" height="9" fill="#fff" stroke="#ccc" stroke-width="0.8"/><rect x="15.1" y="15.9" width="8" height="7.8" fill="#edc240"/><rect x="10.0" y="10" width="350.40" height="88.00" fill="none" stroke="#545454" stroke-width="1.6"/></svg><div class="t " style="left:294.79999999999995px;top:680.72px;font-size:8.75px;line-height:10.5px;color:#545454;font-weight:normal;">MOS (Anrufer)</div><div class="t" style="left:199.40px;width:76.60px;text-align:right;top:758.75px;font-size:8.75px;line-height:10.5px;color:#545454;">0</div><div class="t" style="left:199.40px;width:76.60px;text-align:right;top:741.15px;font-size:8.75px;line-height:10.5px;color:#545454;">1</div><div class="t" style="left:199.40px;width:76.60px;text-align:right;top:723.55px;font-size:8.75px;line-height:10.5px;color:#545454;">2</div><div class="t" style="left:199.40px;width:76.60px;text-align:right;top:705.95px;font-size:8.75px;line-height:10.5px;color:#545454;">3</div><div class="t" style="left:199.40px;width:76.60px;text-align:right;top:688.35px;font-size:8.75px;line-height:10.5px;color:#545454;">4</div><div class="t" style="left:199.40px;width:76.60px;text-align:right;top:670.75px;font-size:8.75px;line-height:10.5px;color:#545454;">5</div><div class="t" style="left:284.60px;width:120px;text-align:center;top:766.72px;font-size:8.75px;line-height:10.5px;color:#545454;font-weight:normal;">2019-03-06 10:53:00</div><div class="t" style="left:390.50px;width:120px;text-align:center;top:766.72px;font-size:8.75px;line-height:10.5px;color:#545454;font-weight:normal;">10:53:30</div><div class="t" style="left:496.50px;width:120px;text-align:center;top:766.72px;font-size:8.75px;line-height:10.5px;color:#545454;font-weight:normal;">10:54:00</div><svg width="10" height="10" style="left:647.8px;top:669.4px"><circle cx="4.3" cy="4.3" r="3.3" fill="none" stroke="#111" stroke-width="1.5"/><line x1="6.8" y1="6.8" x2="9" y2="9" stroke="#111" stroke-width="1.7" stroke-linecap="round"/></svg><svg width="9" height="6" style="left:648.4px;top:686.4px"><polygon points="0,0 7.6,0 3.8,4.3" fill="#222"/></svg><svg width="370.6" height="108.0" style="left:701.7px;top:666px"><line x1="10.0" y1="80.4" x2="360.6" y2="80.4" stroke="#e6e6e6" stroke-width="1"/><line x1="10.0" y1="62.8" x2="360.6" y2="62.8" stroke="#e6e6e6" stroke-width="1"/><line x1="10.0" y1="45.2" x2="360.6" y2="45.2" stroke="#e6e6e6" stroke-width="1"/><line x1="10.0" y1="27.6" x2="360.6" y2="27.6" stroke="#e6e6e6" stroke-width="1"/><line x1="75.1" y1="10" x2="75.1" y2="98" stroke="#e6e6e6" stroke-width="1"/><line x1="181.3" y1="10" x2="181.3" y2="98" stroke="#e6e6e6" stroke-width="1"/><line x1="286.9" y1="10" x2="286.9" y2="98" stroke="#e6e6e6" stroke-width="1"/><polyline points="106.8,22.2 276.1,22.2" fill="none" stroke="rgba(0,0,0,0.09)" stroke-width="1.6" stroke-linejoin="round"/><polyline points="106.8,21 276.1,21" fill="none" stroke="#edc240" stroke-width="1.6" stroke-linejoin="round"/><rect x="11.5" y="13.5" width="91" height="14.2" fill="rgba(255,255,255,0.85)"/><rect x="14.35" y="15.5" width="9.5" height="9" fill="#fff" stroke="#ccc" stroke-width="0.8"/><rect x="15.1" y="15.9" width="8" height="7.8" fill="#edc240"/><rect x="10.0" y="10" width="350.60" height="88.00" fill="none" stroke="#545454" stroke-width="1.6"/></svg><div class="t " style="left:727.1px;top:680.72px;font-size:8.75px;line-height:10.5px;color:#545454;font-weight:normal;">MOS (Angerufener)</div><div class="t" style="left:631.70px;width:76.60px;text-align:right;top:758.75px;font-size:8.75px;line-height:10.5px;color:#545454;">0</div><div class="t" style="left:631.70px;width:76.60px;text-align:right;top:741.15px;font-size:8.75px;line-height:10.5px;color:#545454;">1</div><div class="t" style="left:631.70px;width:76.60px;text-align:right;top:723.55px;font-size:8.75px;line-height:10.5px;color:#545454;">2</div><div class="t" style="left:631.70px;width:76.60px;text-align:right;top:705.95px;font-size:8.75px;line-height:10.5px;color:#545454;">3</div><div class="t" style="left:631.70px;width:76.60px;text-align:right;top:688.35px;font-size:8.75px;line-height:10.5px;color:#545454;">4</div><div class="t" style="left:631.70px;width:76.60px;text-align:right;top:670.75px;font-size:8.75px;line-height:10.5px;color:#545454;">5</div><div class="t" style="left:716.80px;width:120px;text-align:center;top:766.72px;font-size:8.75px;line-height:10.5px;color:#545454;font-weight:normal;">2019-03-06 10:53:00</div><div class="t" style="left:823.00px;width:120px;text-align:center;top:766.72px;font-size:8.75px;line-height:10.5px;color:#545454;font-weight:normal;">10:53:30</div><div class="t" style="left:928.60px;width:120px;text-align:center;top:766.72px;font-size:8.75px;line-height:10.5px;color:#545454;font-weight:normal;">10:54:00</div><svg width="10" height="10" style="left:1080.0px;top:669.4px"><circle cx="4.3" cy="4.3" r="3.3" fill="none" stroke="#111" stroke-width="1.5"/><line x1="6.8" y1="6.8" x2="9" y2="9" stroke="#111" stroke-width="1.7" stroke-linecap="round"/></svg><svg width="9" height="6" style="left:1080.6px;top:686.4px"><polygon points="0,0 7.6,0 3.8,4.3" fill="#222"/></svg></div></body></html>
